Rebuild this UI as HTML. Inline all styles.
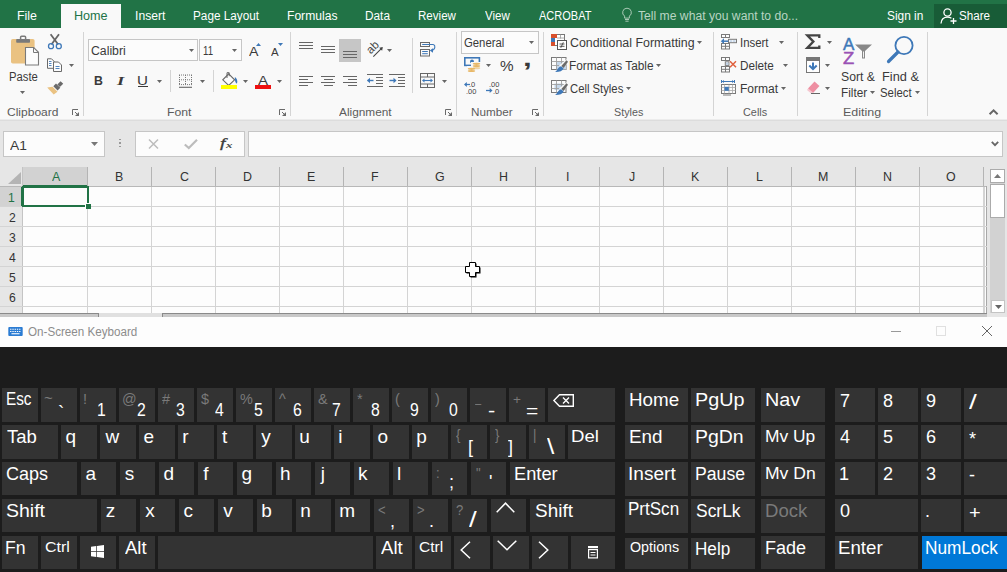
<!DOCTYPE html>
<html><head><meta charset="utf-8"><title>Excel - On-Screen Keyboard</title>
<style>
html,body{margin:0;padding:0;}
body{width:1007px;height:572px;overflow:hidden;position:relative;background:#e6e6e6;font-family:"Liberation Sans",sans-serif;}
#r{position:absolute;left:0;top:0;width:1007px;height:572px;overflow:hidden;}
#r>div,#r>span,#r>svg{position:absolute;}
#r>span{white-space:pre;line-height:1;transform-origin:0 0;}
#r>svg{overflow:visible;}
</style></head><body><div id="r">
<div style="left:0px;top:0px;width:1007px;height:28px;background:#217346;"></div>
<div style="left:0px;top:28px;width:1007px;height:92px;background:#f9f9f9;"></div>
<div style="left:0px;top:119px;width:1007px;height:1px;background:#ececec;"></div>
<div style="left:0px;top:120px;width:1007px;height:1px;background:#dcdcdc;"></div>
<div style="left:61px;top:4px;width:60px;height:26px;background:#f9f9f9;"></div>
<div style="left:934px;top:4px;width:73px;height:24px;background:#185c37;"></div>
<span style="left:17.18px;top:10.32px;font-size:12.5px;color:#fff;transform:scaleX(0.9913);">File</span>
<span style="left:73.97px;top:10.32px;font-size:12.5px;color:#217346;transform:scaleX(1.0075);">Home</span>
<span style="left:134.88px;top:10.32px;font-size:12.5px;color:#fff;transform:scaleX(0.9728);">Insert</span>
<span style="left:193.04px;top:10.32px;font-size:12.5px;color:#fff;transform:scaleX(0.9409);">Page Layout</span>
<span style="left:287.01px;top:10.32px;font-size:12.5px;color:#fff;transform:scaleX(0.9681);">Formulas</span>
<span style="left:365.03px;top:10.32px;font-size:12.5px;color:#fff;transform:scaleX(0.9457);">Data</span>
<span style="left:418.05px;top:10.32px;font-size:12.5px;color:#fff;transform:scaleX(0.9252);">Review</span>
<span style="left:484.95px;top:10.32px;font-size:12.5px;color:#fff;transform:scaleX(0.9236);">View</span>
<span style="left:538.98px;top:10.32px;font-size:12.5px;color:#fff;transform:scaleX(0.8817);">ACROBAT</span>
<span style="left:637.73px;top:10.32px;font-size:12.5px;color:#b9d5c3;transform:scaleX(0.9719);">Tell me what you want to do...</span>
<span style="left:887.46px;top:10.32px;font-size:12.5px;color:#fff;transform:scaleX(0.9500);">Sign in</span>
<span style="left:959.47px;top:10.32px;font-size:12.5px;color:#fff;transform:scaleX(0.9307);">Share</span>
<svg style="left:620.8px;top:7px;" width="12" height="16" viewBox="0 0 12 16"><path d="M6 1.2a4.3 4.3 0 0 0-2.4 7.9v2h4.8v-2A4.3 4.3 0 0 0 6 1.2z" fill="none" stroke="#a9c9b5" stroke-width="1"/><path d="M4 12.5h4M4.4 14.2h3.2" stroke="#a9c9b5" stroke-width="1"/></svg>
<svg style="left:940px;top:7px;" width="18" height="18" viewBox="0 0 18 18"><circle cx="7.5" cy="5.5" r="3.6" fill="none" stroke="#fff" stroke-width="1.3"/><path d="M1 16.5c.3-4 2.6-6.3 6.5-6.3 1.6 0 2.9.4 3.9 1.1" fill="none" stroke="#fff" stroke-width="1.3"/><path d="M13.5 11v6M10.5 14h6" stroke="#fff" stroke-width="1.3"/></svg>
<div style="left:83px;top:32px;width:1px;height:84px;background:#d4d4d4;"></div>
<div style="left:290px;top:32px;width:1px;height:84px;background:#d4d4d4;"></div>
<div style="left:456px;top:32px;width:1px;height:84px;background:#d4d4d4;"></div>
<div style="left:543px;top:32px;width:1px;height:84px;background:#d4d4d4;"></div>
<div style="left:713px;top:32px;width:1px;height:84px;background:#d4d4d4;"></div>
<div style="left:797px;top:32px;width:1px;height:84px;background:#d4d4d4;"></div>
<div style="left:927px;top:32px;width:1px;height:84px;background:#d4d4d4;"></div>
<span style="left:6.99px;top:107.09px;font-size:11px;color:#5c5c5c;transform:scaleX(1.0935);">Clipboard</span>
<span style="left:166.60px;top:107.09px;font-size:11px;color:#5c5c5c;transform:scaleX(1.1128);">Font</span>
<span style="left:339.28px;top:107.09px;font-size:11px;color:#5c5c5c;transform:scaleX(1.0755);">Alignment</span>
<span style="left:470.64px;top:107.09px;font-size:11px;color:#5c5c5c;transform:scaleX(1.0621);">Number</span>
<span style="left:613.71px;top:107.09px;font-size:11px;color:#5c5c5c;transform:scaleX(0.9774);">Styles</span>
<span style="left:742.85px;top:107.09px;font-size:11px;color:#5c5c5c;transform:scaleX(0.9875);">Cells</span>
<span style="left:843.38px;top:107.09px;font-size:11px;color:#5c5c5c;transform:scaleX(1.1336);">Editing</span>
<svg style="left:71.9px;top:109px;" width="8" height="8" viewBox="0 0 8 8"><path d="M0.500 6V0.500H6" fill="none" stroke="#6a6a6a" stroke-width="1"/><path d="M3 3l2.500 2.500" stroke="#6a6a6a" stroke-width="1"/><path d="M7 3v4H3z" fill="#6a6a6a"/></svg>
<svg style="left:278.9px;top:109px;" width="8" height="8" viewBox="0 0 8 8"><path d="M0.500 6V0.500H6" fill="none" stroke="#6a6a6a" stroke-width="1"/><path d="M3 3l2.500 2.500" stroke="#6a6a6a" stroke-width="1"/><path d="M7 3v4H3z" fill="#6a6a6a"/></svg>
<svg style="left:445.3px;top:109px;" width="8" height="8" viewBox="0 0 8 8"><path d="M0.500 6V0.500H6" fill="none" stroke="#6a6a6a" stroke-width="1"/><path d="M3 3l2.500 2.500" stroke="#6a6a6a" stroke-width="1"/><path d="M7 3v4H3z" fill="#6a6a6a"/></svg>
<svg style="left:532.2px;top:109px;" width="8" height="8" viewBox="0 0 8 8"><path d="M0.500 6V0.500H6" fill="none" stroke="#6a6a6a" stroke-width="1"/><path d="M3 3l2.500 2.500" stroke="#6a6a6a" stroke-width="1"/><path d="M7 3v4H3z" fill="#6a6a6a"/></svg>
<svg style="left:0px;top:0px;" width="100" height="100" viewBox="0 0 100 100">
<rect x="11" y="39" width="23.6" height="24.6" rx="1.8" fill="#eac282"/>
<rect x="16.2" y="39" width="13.8" height="3.8" rx="0.8" fill="#7a7a7a"/>
<rect x="20.6" y="36.300" width="5" height="4" rx="1" fill="none" stroke="#7a7a7a" stroke-width="1.500"/>
<path d="M25.500 47.500h8.200l4.800 4.800v12.700h-13z" fill="#fcfcfc" stroke="#7a7a7a" stroke-width="1.100"/>
<path d="M33.500 47.500v5h5" fill="none" stroke="#7a7a7a" stroke-width="1"/>
<path d="M50.600 34.300L58.200 44.500M59 34.300L51.400 44.500" stroke="#666" stroke-width="1.800" fill="none"/>
<circle cx="51" cy="46.200" r="2.500" fill="none" stroke="#3e78b8" stroke-width="1.300"/>
<circle cx="58.800" cy="46.200" r="2.500" fill="none" stroke="#3e78b8" stroke-width="1.300"/>
<path d="M47.500 58.800h4l2.500 2.500v7h-6.500z" fill="#fcfcfc" stroke="#6a6a6a" stroke-width="1"/>
<path d="M53.500 62h5l3 3v6.500h-8z" fill="#fcfcfc" stroke="#6a6a6a" stroke-width="1"/>
<path d="M49 61.500h2.500M49 63.500h2.500M49 65.500h2.500M55.500 66.500h4M55.500 68.500h4" stroke="#3e78b8" stroke-width="0.900"/>
<path d="M57.300 84.500l3.300-3.300 2.600 2.600-3.300 3.300z" fill="#6a6a6a"/>
<path d="M53.300 86.200l2.700-2.700 4.300 4.300-2.700 2.700z" fill="#6a6a6a"/>
<path d="M52.500 86.800l5 5-3.800 2.800-6.500-7z" fill="#eac282"/>
</svg>
<span style="left:8.68px;top:71.14px;font-size:12px;color:#3a3a3a;transform:scaleX(0.9394);">Paste</span>
<svg style="left:20px;top:91px;" width="5" height="3" viewBox="0 0 5 3"><path d="M0 0H5L2.5 3z" fill="#666"/></svg>
<svg style="left:69px;top:64px;" width="5" height="3" viewBox="0 0 5 3"><path d="M0 0H5L2.5 3z" fill="#666"/></svg>
<div style="left:88px;top:39px;width:110px;height:22px;background:#fcfcfc;border:1px solid #c6c6c6;box-sizing:border-box;"></div>
<div style="left:199px;top:39px;width:43px;height:22px;background:#fcfcfc;border:1px solid #c6c6c6;box-sizing:border-box;"></div>
<span style="left:91.08px;top:45.44px;font-size:12px;color:#3a3a3a;transform:scaleX(1.0218);">Calibri</span>
<span style="left:202.77px;top:45.44px;font-size:12px;color:#3a3a3a;transform:scaleX(0.8018);">11</span>
<svg style="left:189px;top:49px;" width="5" height="3" viewBox="0 0 5 3"><path d="M0 0H5L2.5 3z" fill="#666"/></svg>
<svg style="left:232px;top:49px;" width="5" height="3" viewBox="0 0 5 3"><path d="M0 0H5L2.5 3z" fill="#666"/></svg>
<span style="left:248.57px;top:44.67px;font-size:13.5px;color:#3a3a3a;transform:scaleX(1.0501);">A</span>
<svg style="left:256px;top:43px;" width="5" height="3" viewBox="0 0 5 3"><path d="M0 3H5L2.5 0z" fill="#3e78b8"/></svg>
<span style="left:271.38px;top:47.21px;font-size:10.5px;color:#3a3a3a;transform:scaleX(1.0916);">A</span>
<svg style="left:278px;top:43px;" width="5" height="3" viewBox="0 0 5 3"><path d="M0 0H5L2.5 3z" fill="#3e78b8"/></svg>
<span style="left:93.68px;top:74.94px;font-size:12px;color:#3a3a3a;font-weight:bold;transform:scaleX(1.0248);">B</span>
<span style="left:117.07px;top:74.52px;font-size:12.5px;color:#3a3a3a;font-family:'Liberation Serif',serif;font-style:italic;transform:scaleX(1.4895);font-weight:bold;">I</span>
<span style="left:137.23px;top:74.52px;font-size:12.5px;color:#3a3a3a;transform:scaleX(1.2115);">U</span>
<div style="left:138px;top:86px;width:9.5px;height:1px;background:#3a3a3a;"></div>
<svg style="left:157px;top:80px;" width="5" height="3" viewBox="0 0 5 3"><path d="M0 0H5L2.5 3z" fill="#666"/></svg>
<div style="left:170px;top:70px;width:1px;height:22px;background:#d4d4d4;"></div>
<div style="left:213px;top:70px;width:1px;height:22px;background:#d4d4d4;"></div>
<svg style="left:179px;top:73.5px;" width="14" height="14" viewBox="0 0 14 14"><path d="M0 1h13M0 5.800h13M0 10.600h13" fill="none" stroke="#777" stroke-width="1" stroke-dasharray="1 1"/><path d="M0.500 1v10M6.500 1v10M12.500 1v10" fill="none" stroke="#777" stroke-width="1" stroke-dasharray="1 1"/><path d="M0 13.300h13" stroke="#666" stroke-width="1.100"/></svg>
<svg style="left:200px;top:80px;" width="5" height="3" viewBox="0 0 5 3"><path d="M0 0H5L2.5 3z" fill="#666"/></svg>
<svg style="left:0px;top:0px;" width="300" height="100" viewBox="0 0 300 100"><path d="M228.700 73.900L234.600 79.800 228.700 85.500 222.800 79.800z" fill="#fcfcfc" stroke="#666" stroke-width="1.100"/>
<path d="M227 78v-5.300h2.200v3.500" fill="none" stroke="#666" stroke-width="1"/>
<path d="M234.900 77c2 1.300 3 3.800 2 6.800-1.700-1.200-2.300-3.300-2-6.800z" fill="#3e78b8"/><rect x="221" y="85" width="16" height="4" fill="#ffff00"/></svg>
<svg style="left:243px;top:80px;" width="5" height="3" viewBox="0 0 5 3"><path d="M0 0H5L2.5 3z" fill="#666"/></svg>
<span style="left:257.97px;top:73.67px;font-size:13.5px;color:#3a3a3a;transform:scaleX(1.1171);">A</span>
<div style="left:255px;top:85px;width:16px;height:4px;background:#ee1111;"></div>
<svg style="left:277px;top:80px;" width="5" height="3" viewBox="0 0 5 3"><path d="M0 0H5L2.5 3z" fill="#666"/></svg>
<div style="left:299px;top:42px;width:14px;height:1px;background:#666;"></div>
<div style="left:299px;top:45px;width:14px;height:1px;background:#666;"></div>
<div style="left:299px;top:48px;width:14px;height:1px;background:#666;"></div>
<div style="left:321px;top:46px;width:14px;height:1px;background:#666;"></div>
<div style="left:321px;top:49px;width:14px;height:1px;background:#666;"></div>
<div style="left:321px;top:52px;width:14px;height:1px;background:#666;"></div>
<div style="left:339px;top:39px;width:22px;height:23px;background:#c6c6c6;"></div>
<div style="left:343px;top:51px;width:14px;height:1px;background:#666;"></div>
<div style="left:343px;top:54px;width:14px;height:1px;background:#666;"></div>
<div style="left:343px;top:57px;width:14px;height:1px;background:#666;"></div>
<svg style="left:366px;top:41px;" width="18" height="17" viewBox="0 0 18 17"><text transform="translate(4.700,13.600) rotate(-45)" font-size="11.5" font-family="Liberation Sans,sans-serif" fill="#444">ab</text>
<path d="M7.300 15.600L15.800 7.100" stroke="#444" stroke-width="1.100"/><path d="M16.800 6.100l-3.600 .700 2.900 2.900z" fill="#444"/></svg>
<svg style="left:387px;top:49px;" width="5" height="3" viewBox="0 0 5 3"><path d="M0 0H5L2.5 3z" fill="#666"/></svg>
<div style="left:412px;top:38px;width:1px;height:55px;background:#d4d4d4;"></div>
<svg style="left:420px;top:42px;" width="17" height="16" viewBox="0 0 17 16"><rect x="0.500" y="0.500" width="9" height="4" fill="none" stroke="#6a6a6a"/><rect x="0.500" y="7.500" width="9" height="6.500" fill="none" stroke="#6a6a6a"/>
<path d="M2.200 2.500h11.500M2.200 9.500h5.600M2.200 11.700h5.600" stroke="#3e78b8" stroke-width="1"/><path d="M13.500 2.500c2 1 2.300 5.500-2.500 6" fill="none" stroke="#3e78b8" stroke-width="1.100"/><path d="M9.800 8.500l3.200-2.200v4.400z" fill="#3e78b8"/></svg>
<svg style="left:420px;top:73px;" width="15" height="15" viewBox="0 0 15 15"><rect x="0.5" y="0.5" width="14" height="14" fill="none" stroke="#666"/><path d="M0.5 4h14M0.5 11h14M7.5 0.5v3.5M7.5 11v3.5" stroke="#666"/>
<path d="M3 7.5h9" stroke="#3e78b8" stroke-width="1.1"/><path d="M2 7.5l2.5-2v4zM13 7.5l-2.5-2v4z" fill="#3e78b8"/></svg>
<svg style="left:442px;top:80px;" width="5" height="3" viewBox="0 0 5 3"><path d="M0 0H5L2.5 3z" fill="#666"/></svg>
<div style="left:299px;top:76px;width:14px;height:1px;background:#666;"></div>
<div style="left:299px;top:79px;width:9px;height:1px;background:#666;"></div>
<div style="left:299px;top:82px;width:14px;height:1px;background:#666;"></div>
<div style="left:299px;top:85px;width:9px;height:1px;background:#666;"></div>
<div style="left:321.0px;top:76px;width:14px;height:1px;background:#666;"></div>
<div style="left:323.5px;top:79px;width:9px;height:1px;background:#666;"></div>
<div style="left:321.0px;top:82px;width:14px;height:1px;background:#666;"></div>
<div style="left:323.5px;top:85px;width:9px;height:1px;background:#666;"></div>
<div style="left:343px;top:76px;width:14px;height:1px;background:#666;"></div>
<div style="left:348px;top:79px;width:9px;height:1px;background:#666;"></div>
<div style="left:343px;top:82px;width:14px;height:1px;background:#666;"></div>
<div style="left:348px;top:85px;width:9px;height:1px;background:#666;"></div>
<svg style="left:367px;top:74px;" width="16" height="13" viewBox="0 0 16 13"><path d="M0 0.5h16M9 3.5h7M9 6.5h7M9 9.5h7M0 12.5h16" stroke="#666" stroke-width="1"/><path d="M0.5 6.5h6" stroke="#3e78b8" stroke-width="1.4"/><path d="M0 6.5l3-2.8v5.6z" fill="#3e78b8"/></svg>
<svg style="left:389px;top:74px;" width="16" height="13" viewBox="0 0 16 13"><path d="M0 0.5h16M9 3.5h7M9 6.5h7M9 9.5h7M0 12.5h16" stroke="#666" stroke-width="1"/><path d="M0.5 6.5h6" stroke="#3e78b8" stroke-width="1.4"/><path d="M7.5 6.5l-3-2.8v5.6z" fill="#3e78b8"/></svg>
<div style="left:461px;top:31px;width:78px;height:23px;background:#fcfcfc;border:1px solid #c6c6c6;box-sizing:border-box;"></div>
<span style="left:464.13px;top:37.04px;font-size:12px;color:#3a3a3a;transform:scaleX(0.9446);">General</span>
<svg style="left:529px;top:41px;" width="5" height="3" viewBox="0 0 5 3"><path d="M0 0H5L2.5 3z" fill="#666"/></svg>
<svg style="left:464px;top:57px;" width="17" height="16" viewBox="0 0 17 16"><rect x="0.800" y="0.800" width="14.600" height="7.600" fill="none" stroke="#3e78b8" stroke-width="1.600"/><circle cx="8" cy="4.500" r="2" fill="#3e78b8"/>
<rect x="7" y="5" width="10" height="5" fill="#f9f9f9"/><rect x="3" y="9" width="10" height="6" fill="#f9f9f9"/>
<ellipse cx="12.500" cy="6.800" rx="3.700" ry="1.100" fill="#e8b868"/><ellipse cx="12.500" cy="9" rx="3.700" ry="1.100" fill="#e8b868"/><ellipse cx="12.500" cy="11.200" rx="3.700" ry="1.100" fill="#f0d4a4"/>
<ellipse cx="7.500" cy="11.800" rx="3.700" ry="1.100" fill="#e8b868"/><ellipse cx="7.500" cy="14" rx="3.700" ry="1.100" fill="#e8b868"/></svg>
<svg style="left:486px;top:64px;" width="5" height="3" viewBox="0 0 5 3"><path d="M0 0H5L2.5 3z" fill="#666"/></svg>
<span style="left:499.76px;top:59.05px;font-size:14px;color:#3a3a3a;transform:scaleX(1.0917);">%</span>
<span style="left:522.67px;top:48.47px;font-size:22px;color:#3a3a3a;font-weight:bold;transform:scaleX(1.4297);">,</span>
<svg style="left:464px;top:81px;" width="15" height="13" viewBox="0 0 15 13"><text x="5" y="6" font-size="7.5" font-family="Liberation Sans,sans-serif" fill="#444">.0</text><text x="2" y="13" font-size="7.5" font-family="Liberation Sans,sans-serif" fill="#444">.00</text>
<path d="M1 3.5h5" stroke="#3e78b8" stroke-width="1.3"/><path d="M0 3.5l2.8-2.5v5z" fill="#3e78b8"/></svg>
<svg style="left:486px;top:81px;" width="15" height="13" viewBox="0 0 15 13"><text x="3" y="6" font-size="7.5" font-family="Liberation Sans,sans-serif" fill="#444">.00</text><text x="7" y="13" font-size="7.5" font-family="Liberation Sans,sans-serif" fill="#444">.0</text>
<path d="M0 9.5h5" stroke="#3e78b8" stroke-width="1.3"/><path d="M6.5 9.5l-2.8-2.5v5z" fill="#3e78b8"/></svg>
<svg style="left:551px;top:34px;" width="16" height="16" viewBox="0 0 16 16"><rect x="0.5" y="0.5" width="13" height="11" fill="#fff" stroke="#777"/><rect x="0" y="0" width="6" height="4" fill="#d8502d"/><rect x="0" y="4" width="4" height="4" fill="#3e78b8"/><rect x="0" y="8" width="4" height="4" fill="#d8502d"/>
<path d="M6 4h7.5M9.5 0.5v4" stroke="#999" stroke-width="0.8"/><rect x="6.5" y="6.5" width="9" height="9" fill="#fff" stroke="#555"/><path d="M8.5 10h5M8.5 12.3h5M12.3 8.3l-2.5 5.5" stroke="#444" stroke-width="0.9"/></svg>
<svg style="left:551px;top:57px;" width="18" height="17" viewBox="0 0 18 17"><rect x="0.500" y="0.500" width="14.500" height="12" fill="#fcfcfc" stroke="#7a7a7a"/><rect x="5.500" y="4.500" width="9.500" height="8" fill="#c5d7ea"/><path d="M0.500 4.500h14.500M0.500 8.500h14.500M5.500 0.500v12M10.500 0.500v12" stroke="#a0a0a0" stroke-width="0.900"/>
<path d="M8 8.500l8-6.500 2 2.500-6.500 7.500z" fill="#f9f9f9"/>
<path d="M15.500 3.200l1.500 1.500-4.300 6.200-2.400-1.900z" fill="#6a6a6a"/><path d="M10 9.200l2.600 2c-1.100 3-4.600 4-8.600 3.800 2.500-1.300 2.500-4.800 6-5.800z" fill="#3e78b8"/></svg>
<svg style="left:551px;top:80px;" width="18" height="17" viewBox="0 0 18 17"><rect x="0.500" y="0.500" width="14.500" height="12" fill="#fcfcfc" stroke="#7a7a7a"/><rect x="3.500" y="3.500" width="8.500" height="6.500" fill="#c5d7ea"/><path d="M0.500 4.500h14.500M0.500 8.500h14.500M5.500 0.500v12M10.500 0.500v12" stroke="#a0a0a0" stroke-width="0.900"/>
<path d="M8 8.500l8-6.500 2 2.500-6.500 7.500z" fill="#f9f9f9"/>
<path d="M15.500 3.200l1.500 1.500-4.300 6.200-2.400-1.900z" fill="#6a6a6a"/><path d="M10 9.200l2.600 2c-1.100 3-4.600 4-8.600 3.800 2.500-1.300 2.500-4.800 6-5.800z" fill="#3e78b8"/></svg>
<span style="left:569.77px;top:36.64px;font-size:12px;color:#3a3a3a;transform:scaleX(1.0323);">Conditional Formatting</span>
<span style="left:569.43px;top:59.84px;font-size:12px;color:#3a3a3a;transform:scaleX(0.9855);">Format as Table</span>
<span style="left:569.83px;top:82.94px;font-size:12px;color:#3a3a3a;transform:scaleX(0.9400);">Cell Styles</span>
<svg style="left:697.3px;top:41px;" width="5" height="3" viewBox="0 0 5 3"><path d="M0 0H5L2.5 3z" fill="#666"/></svg>
<svg style="left:656px;top:64px;" width="5" height="3" viewBox="0 0 5 3"><path d="M0 0H5L2.5 3z" fill="#666"/></svg>
<svg style="left:625.7px;top:87px;" width="5" height="3" viewBox="0 0 5 3"><path d="M0 0H5L2.5 3z" fill="#666"/></svg>
<svg style="left:0px;top:0px;" width="800" height="100" viewBox="0 0 800 100">
<g fill="#fcfcfc" stroke="#7a7a7a" stroke-width="1">
<rect x="721.500" y="34.500" width="8" height="3"/><path d="M725.500 34.500v3"/>
<rect x="721.500" y="43.500" width="8" height="5.500"/><path d="M725.500 43.500v5.500M721.500 46.300h8"/>
<rect x="728.500" y="39.300" width="8" height="3.400"/>
<rect x="721.500" y="57.500" width="8" height="3"/><path d="M725.500 57.500v3"/>
<rect x="721.500" y="66.500" width="8" height="5.500"/><path d="M725.500 66.500v5.500M721.500 69.300h8"/>
<rect x="725.300" y="61.800" width="3.600" height="3.600"/>
<rect x="721.500" y="84.500" width="14" height="9"/><path d="M723 95h8"/>
</g>
<rect x="729.800" y="40.300" width="2.500" height="1.500" fill="#bdd0e6"/><rect x="733" y="40.300" width="2.500" height="1.500" fill="#bdd0e6"/>
<rect x="726" y="62.500" width="2.300" height="2.300" fill="#bdd0e6"/>
<path d="M720.800 41.200l3.200-2.900v5.800z" fill="#3e78b8"/><path d="M722.500 41.200h5.700" stroke="#3e78b8" stroke-width="1.500"/>
<path d="M730 61.300l6 6M736 61.300l-6 6" stroke="#e0603d" stroke-width="1.500"/>
<path d="M721.500 80v3M734.500 80v3M722 81.500h12" stroke="#3e78b8" stroke-width="1"/><path d="M722 81.500l2-1.500v3zM734 81.500l-2-1.500v3z" fill="#3e78b8"/>
<path d="M721.500 87.500h14M721.500 90.500h14M724.500 84.500v9M729 84.500v9M732.500 84.500v9" stroke="#a8a8a8" stroke-width="0.800"/>
<rect x="724.500" y="86.800" width="4.300" height="4" fill="#3e78b8"/>
</svg>
<span style="left:740.25px;top:36.64px;font-size:12px;color:#3a3a3a;transform:scaleX(0.9508);">Insert</span>
<span style="left:739.54px;top:59.84px;font-size:12px;color:#3a3a3a;transform:scaleX(0.9768);">Delete</span>
<span style="left:739.51px;top:82.94px;font-size:12px;color:#3a3a3a;transform:scaleX(1.0046);">Format</span>
<svg style="left:779px;top:41px;" width="5" height="3" viewBox="0 0 5 3"><path d="M0 0H5L2.5 3z" fill="#666"/></svg>
<svg style="left:783px;top:64px;" width="5" height="3" viewBox="0 0 5 3"><path d="M0 0H5L2.5 3z" fill="#666"/></svg>
<svg style="left:781px;top:87px;" width="5" height="3" viewBox="0 0 5 3"><path d="M0 0H5L2.5 3z" fill="#666"/></svg>
<svg style="left:804.5px;top:34px;" width="16" height="15.5" viewBox="0 0 16 15.5"><path d="M14.300 4V1.300H2.300L8.400 7.600 2.300 13.900H14.300V11.500" fill="none" stroke="#444" stroke-width="2.300"/></svg>
<svg style="left:827px;top:41px;" width="5" height="3" viewBox="0 0 5 3"><path d="M0 0H5L2.5 3z" fill="#666"/></svg>
<svg style="left:806px;top:57px;" width="14" height="16" viewBox="0 0 14 16"><rect x="0.500" y="0.500" width="13" height="15" fill="#fff" stroke="#777"/><rect x="0" y="0" width="14" height="4" fill="#777"/><path d="M7 5.500v6.500" stroke="#3e78b8" stroke-width="2"/><path d="M3.300 8.500l3.700 3.700L10.700 8.500" fill="none" stroke="#3e78b8" stroke-width="2"/></svg>
<svg style="left:825px;top:64px;" width="5" height="3" viewBox="0 0 5 3"><path d="M0 0H5L2.5 3z" fill="#666"/></svg>
<svg style="left:806px;top:81px;" width="15" height="13" viewBox="0 0 15 13"><path d="M8.500 0.500l5 4.500-6.500 7-5-4.500z" fill="#ee8fa2"/><path d="M2 7.500l5 4.500-1.300 1-4.700-4z" fill="#f6c6cf"/><path d="M5 12.500h9" stroke="#666" stroke-width="1"/></svg>
<svg style="left:825px;top:87px;" width="5" height="3" viewBox="0 0 5 3"><path d="M0 0H5L2.5 3z" fill="#666"/></svg>
<span style="left:842.67px;top:36.13px;font-size:16.5px;color:#3e78b8;transform:scaleX(1.0328);-webkit-text-stroke:0.45px #3e78b8;">A</span>
<span style="left:843.01px;top:49.63px;font-size:16.5px;color:#9a52b5;transform:scaleX(1.1173);-webkit-text-stroke:0.45px #9a52b5;">Z</span>
<svg style="left:855px;top:44px;" width="17" height="15" viewBox="0 0 17 15"><path d="M0 0.500h17l-6.500 6v8h-4v-8z" fill="#fff"/><path d="M0 0.500h17l-7 6.500v7.500h-3v-7.500z" fill="#888"/><path d="M8 7.500v6h1v-6z" fill="#f3f3f3"/></svg>
<span style="left:841.05px;top:71.14px;font-size:12px;color:#3a3a3a;transform:scaleX(1.0180);">Sort &amp;</span>
<span style="left:841.03px;top:87.34px;font-size:12px;color:#3a3a3a;transform:scaleX(0.9811);">Filter</span>
<svg style="left:869.7px;top:91px;" width="5" height="3" viewBox="0 0 5 3"><path d="M0 0H5L2.5 3z" fill="#666"/></svg>
<svg style="left:886px;top:34px;" width="30" height="30" viewBox="0 0 30 30"><circle cx="18" cy="11.500" r="8.600" fill="none" stroke="#3e78b8" stroke-width="1.800"/><path d="M2.500 27.500l9.500-9.500" stroke="#3e78b8" stroke-width="3.200" stroke-linecap="round"/></svg>
<span style="left:881.95px;top:71.14px;font-size:12px;color:#3a3a3a;transform:scaleX(1.0654);">Find &amp;</span>
<span style="left:880.48px;top:87.34px;font-size:12px;color:#3a3a3a;transform:scaleX(0.9475);">Select</span>
<svg style="left:915px;top:91px;" width="5" height="3" viewBox="0 0 5 3"><path d="M0 0H5L2.5 3z" fill="#666"/></svg>
<svg style="left:988px;top:108px;" width="12" height="8" viewBox="0 0 12 8"><path d="M1.600 6.300L5.600 2.300 9.600 6.300" fill="none" stroke="#666" stroke-width="2"/></svg>
<div style="left:0px;top:121px;width:1007px;height:46px;background:#e6e6e6;"></div>
<div style="left:3px;top:131px;width:102px;height:26px;background:#fcfcfc;border:1px solid #c6c6c6;box-sizing:border-box;"></div>
<span style="left:9.77px;top:138.59px;font-size:13px;color:#3a3a3a;transform:scaleX(1.0629);">A1</span>
<svg style="left:91px;top:142px;" width="7" height="4" viewBox="0 0 7 4"><path d="M0 0H7L3.5 4z" fill="#777"/></svg>
<div style="left:119.3px;top:138.5px;width:1.8px;height:1.8px;background:#999;"></div>
<div style="left:119.3px;top:142px;width:1.8px;height:1.8px;background:#999;"></div>
<div style="left:119.3px;top:145.5px;width:1.8px;height:1.8px;background:#999;"></div>
<div style="left:135px;top:131px;width:110px;height:26px;background:#fcfcfc;border:1px solid #c6c6c6;box-sizing:border-box;"></div>
<svg style="left:148px;top:139px;" width="11" height="10" viewBox="0 0 11 10"><path d="M1 0.500l9 9M10 0.500l-9 9" stroke="#bcbcbc" stroke-width="1.500"/></svg>
<svg style="left:183.5px;top:139px;" width="14" height="10" viewBox="0 0 14 10"><path d="M0.800 5.500l4 3.500L13 0.800" fill="none" stroke="#bcbcbc" stroke-width="2.200"/></svg>
<span style="left:220.28px;top:136.17px;font-size:13.5px;color:#3a3a3a;font-family:'Liberation Serif',serif;font-style:italic;transform:scaleX(1.4550);-webkit-text-stroke:0.3px #3a3a3a;">f</span>
<span style="left:226.36px;top:140.58px;font-size:9px;color:#4a4a4a;font-family:'Liberation Serif',serif;font-style:italic;transform:scaleX(1.4362);font-weight:bold;">x</span>
<div style="left:248px;top:131px;width:755px;height:26px;background:#fcfcfc;border:1px solid #c6c6c6;box-sizing:border-box;"></div>
<svg style="left:991px;top:140.5px;" width="8" height="6" viewBox="0 0 8 6"><path d="M0.800 0.800l3.200 3.400 3.200-3.400" fill="none" stroke="#666" stroke-width="1.800"/></svg>
<div style="left:0px;top:167px;width:988px;height:146px;background:#fdfdfd;"></div>
<div style="left:0px;top:167px;width:987px;height:19px;background:#e6e6e6;"></div>
<div style="left:0px;top:186px;width:987px;height:1px;background:#b8b8b8;"></div>
<div style="left:0px;top:187px;width:22px;height:126px;background:#e6e6e6;"></div>
<div style="left:22px;top:167px;width:1px;height:146px;background:#c4c4c4;"></div>
<svg style="left:8px;top:172px;" width="14" height="12" viewBox="0 0 14 12"><path d="M13 0v12H0z" fill="#b4b4b4"/></svg>
<div style="left:23px;top:167px;width:64px;height:19px;background:#d2d2d2;"></div>
<div style="left:23px;top:185px;width:65px;height:2px;background:#217346;"></div>
<div style="left:0px;top:187px;width:22px;height:19px;background:#d2d2d2;"></div>
<div style="left:21px;top:187px;width:2px;height:20px;background:#217346;"></div>
<div style="left:87px;top:167px;width:1px;height:19px;background:#b4b4b4;"></div>
<div style="left:87px;top:187px;width:1px;height:126px;background:#d4d4d4;"></div>
<span style="left:51.56px;top:170.37px;font-size:13.5px;color:#217346;transform:scaleX(0.9200);">A</span>
<div style="left:151px;top:167px;width:1px;height:19px;background:#b4b4b4;"></div>
<div style="left:151px;top:187px;width:1px;height:126px;background:#d4d4d4;"></div>
<span style="left:114.98px;top:170.37px;font-size:13.5px;color:#333;transform:scaleX(0.9200);">B</span>
<div style="left:215px;top:167px;width:1px;height:19px;background:#b4b4b4;"></div>
<div style="left:215px;top:187px;width:1px;height:126px;background:#d4d4d4;"></div>
<span style="left:179.74px;top:170.37px;font-size:13.5px;color:#333;transform:scaleX(0.9200);">C</span>
<div style="left:279px;top:167px;width:1px;height:19px;background:#b4b4b4;"></div>
<div style="left:279px;top:187px;width:1px;height:126px;background:#d4d4d4;"></div>
<span style="left:242.60px;top:170.37px;font-size:13.5px;color:#333;transform:scaleX(0.9200);">D</span>
<div style="left:343px;top:167px;width:1px;height:19px;background:#b4b4b4;"></div>
<div style="left:343px;top:187px;width:1px;height:126px;background:#d4d4d4;"></div>
<span style="left:306.92px;top:170.37px;font-size:13.5px;color:#333;transform:scaleX(0.9200);">E</span>
<div style="left:407px;top:167px;width:1px;height:19px;background:#b4b4b4;"></div>
<div style="left:407px;top:187px;width:1px;height:126px;background:#d4d4d4;"></div>
<span style="left:371.25px;top:170.37px;font-size:13.5px;color:#333;transform:scaleX(0.9200);">F</span>
<div style="left:471px;top:167px;width:1px;height:19px;background:#b4b4b4;"></div>
<div style="left:471px;top:187px;width:1px;height:126px;background:#d4d4d4;"></div>
<span style="left:434.82px;top:170.37px;font-size:13.5px;color:#333;transform:scaleX(0.9200);">G</span>
<div style="left:535px;top:167px;width:1px;height:19px;background:#b4b4b4;"></div>
<div style="left:535px;top:187px;width:1px;height:126px;background:#d4d4d4;"></div>
<span style="left:498.81px;top:170.37px;font-size:13.5px;color:#333;transform:scaleX(0.9200);">H</span>
<div style="left:599px;top:167px;width:1px;height:19px;background:#b4b4b4;"></div>
<div style="left:599px;top:187px;width:1px;height:126px;background:#d4d4d4;"></div>
<span style="left:565.57px;top:170.37px;font-size:13.5px;color:#333;transform:scaleX(0.9200);">I</span>
<div style="left:663px;top:167px;width:1px;height:19px;background:#b4b4b4;"></div>
<div style="left:663px;top:187px;width:1px;height:126px;background:#d4d4d4;"></div>
<span style="left:628.56px;top:170.37px;font-size:13.5px;color:#333;transform:scaleX(0.9200);">J</span>
<div style="left:727px;top:167px;width:1px;height:19px;background:#b4b4b4;"></div>
<div style="left:727px;top:187px;width:1px;height:126px;background:#d4d4d4;"></div>
<span style="left:690.72px;top:170.37px;font-size:13.5px;color:#333;transform:scaleX(0.9200);">K</span>
<div style="left:791px;top:167px;width:1px;height:19px;background:#b4b4b4;"></div>
<div style="left:791px;top:187px;width:1px;height:126px;background:#d4d4d4;"></div>
<span style="left:755.54px;top:170.37px;font-size:13.5px;color:#333;transform:scaleX(0.9200);">L</span>
<div style="left:855px;top:167px;width:1px;height:19px;background:#b4b4b4;"></div>
<div style="left:855px;top:187px;width:1px;height:126px;background:#d4d4d4;"></div>
<span style="left:818.13px;top:170.37px;font-size:13.5px;color:#333;transform:scaleX(0.9200);">M</span>
<div style="left:919px;top:167px;width:1px;height:19px;background:#b4b4b4;"></div>
<div style="left:919px;top:187px;width:1px;height:126px;background:#d4d4d4;"></div>
<span style="left:882.81px;top:170.37px;font-size:13.5px;color:#333;transform:scaleX(0.9200);">N</span>
<div style="left:983px;top:167px;width:1px;height:19px;background:#b4b4b4;"></div>
<div style="left:983px;top:187px;width:1px;height:126px;background:#d4d4d4;"></div>
<span style="left:946.47px;top:170.37px;font-size:13.5px;color:#333;transform:scaleX(0.9200);">O</span>
<div style="left:984px;top:187px;width:1px;height:126px;background:#d4d4d4;"></div>
<div style="left:986px;top:186px;width:1px;height:127px;background:#a8a8a8;"></div>
<div style="left:0px;top:206px;width:987px;height:1px;background:#d4d4d4;"></div>
<span style="left:8.46px;top:191.17px;font-size:13.5px;color:#217346;transform:scaleX(0.9000);">1</span>
<div style="left:0px;top:226px;width:987px;height:1px;background:#d4d4d4;"></div>
<span style="left:8.62px;top:211.17px;font-size:13.5px;color:#333;transform:scaleX(0.9000);">2</span>
<div style="left:0px;top:246px;width:987px;height:1px;background:#d4d4d4;"></div>
<span style="left:8.66px;top:231.17px;font-size:13.5px;color:#333;transform:scaleX(0.9000);">3</span>
<div style="left:0px;top:266px;width:987px;height:1px;background:#d4d4d4;"></div>
<span style="left:8.66px;top:251.17px;font-size:13.5px;color:#333;transform:scaleX(0.9000);">4</span>
<div style="left:0px;top:286px;width:987px;height:1px;background:#d4d4d4;"></div>
<span style="left:8.63px;top:271.17px;font-size:13.5px;color:#333;transform:scaleX(0.9000);">5</span>
<div style="left:0px;top:306px;width:987px;height:1px;background:#d4d4d4;"></div>
<span style="left:8.58px;top:291.17px;font-size:13.5px;color:#333;transform:scaleX(0.9000);">6</span>
<div style="left:22px;top:186px;width:67px;height:21px;background:transparent;border:2px solid #217346;box-sizing:border-box;"></div>
<div style="left:85px;top:203px;width:6px;height:6px;background:#fff;"></div>
<div style="left:86px;top:204px;width:5px;height:5px;background:#217346;"></div>
<div style="left:0px;top:313px;width:1007px;height:3.5px;background:#e0e0e0;"></div>
<div style="left:0px;top:313px;width:98px;height:3.5px;background:#c8c8c8;"></div>
<div style="left:0px;top:313px;width:98px;height:1px;background:#8a8a8a;"></div>
<div style="left:98px;top:313px;width:1px;height:3.5px;background:#8a8a8a;"></div>
<div style="left:162px;top:313px;width:825px;height:3.5px;background:#c8c8c8;"></div>
<div style="left:162px;top:313px;width:825px;height:1px;background:#8a8a8a;"></div>
<div style="left:162px;top:313px;width:1px;height:3.5px;background:#8a8a8a;"></div>
<div style="left:987px;top:167px;width:20px;height:149.5px;background:#e6e6e6;"></div>
<div style="left:990px;top:169px;width:15px;height:144px;background:#d2d2d2;"></div>
<div style="left:990px;top:169px;width:15px;height:14px;background:#fff;border:1px solid #ababab;box-sizing:border-box;"></div>
<svg style="left:994px;top:173.5px;" width="7" height="4" viewBox="0 0 7 4"><path d="M0 4h7l-3.500-4z" fill="#777"/></svg>
<div style="left:990px;top:184px;width:15px;height:34px;background:#fff;border:1px solid #ababab;box-sizing:border-box;"></div>
<div style="left:991px;top:300px;width:14px;height:13px;background:#fff;border:1px solid #c4c4c4;box-sizing:border-box;"></div>
<svg style="left:994.5px;top:304.5px;" width="7" height="4" viewBox="0 0 7 4"><path d="M0 0h7l-3.500 4z" fill="#666"/></svg>
<svg style="left:465px;top:262px;" width="16" height="16" viewBox="0 0 16 16"><path d="M5.500 1.500h6v4h4v6h-4v4h-6v-4h-4v-6h4z" fill="#000"/><path d="M4.500 0.500h6v4h4v6h-4v4h-6v-4h-4v-6h4z" fill="#fff" stroke="#000" stroke-width="1"/></svg>
<div style="left:0px;top:316.5px;width:1007px;height:30.5px;background:#fdfdfd;"></div>
<div style="left:0px;top:347px;width:1007px;height:225px;background:#1c1c1c;"></div>
<svg style="left:7.5px;top:327px;" width="15" height="9" viewBox="0 0 16 10"><rect x="0" y="0" width="16" height="10" rx="1" fill="#2b7cd3"/><path d="M2 2.500h12M2 5h12" stroke="#fff" stroke-width="1.200" stroke-dasharray="1.500 1"/><path d="M3.500 7.500h9" stroke="#fff" stroke-width="1.200"/></svg>
<span style="left:28.45px;top:326.44px;font-size:12px;color:#8c8c8c;transform:scaleX(0.9696);">On-Screen Keyboard</span>
<div style="left:891px;top:331px;width:10px;height:1px;background:#999;"></div>
<div style="left:936px;top:326px;width:10px;height:10px;background:transparent;border:1px solid #e0e0e0;box-sizing:border-box;"></div>
<svg style="left:982px;top:326px;" width="10" height="10" viewBox="0 0 10 10"><path d="M0 0l10 10M10 0l-10 10" stroke="#666" stroke-width="1"/></svg>
<div style="left:2px;top:388px;width:36px;height:34px;background:#333333;"></div>
<span style="left:5.95px;top:390.78px;font-size:17.5px;color:#ffffff;transform:scaleX(0.8726);">Esc</span>
<div style="left:41px;top:388px;width:36px;height:34px;background:#333333;"></div>
<div style="left:80px;top:388px;width:36px;height:34px;background:#333333;"></div>
<div style="left:119px;top:388px;width:36px;height:34px;background:#333333;"></div>
<div style="left:158px;top:388px;width:36px;height:34px;background:#333333;"></div>
<div style="left:197px;top:388px;width:36px;height:34px;background:#333333;"></div>
<div style="left:236px;top:388px;width:36px;height:34px;background:#333333;"></div>
<div style="left:275px;top:388px;width:36px;height:34px;background:#333333;"></div>
<div style="left:314px;top:388px;width:36px;height:34px;background:#333333;"></div>
<div style="left:353px;top:388px;width:36px;height:34px;background:#333333;"></div>
<div style="left:392px;top:388px;width:36px;height:34px;background:#333333;"></div>
<div style="left:431px;top:388px;width:36px;height:34px;background:#333333;"></div>
<div style="left:470px;top:388px;width:36px;height:34px;background:#333333;"></div>
<div style="left:509px;top:388px;width:36px;height:34px;background:#333333;"></div>
<span style="left:83.00px;top:391.28px;font-size:15.5px;color:#7a7a7a;transform:scaleX(0.9300);">!</span>
<span style="left:97.30px;top:401.78px;font-size:17.5px;color:#ffffff;transform:scaleX(0.9000);">1</span>
<span style="left:122.17px;top:391.28px;font-size:15.5px;color:#7a7a7a;transform:scaleX(0.9300);">@</span>
<span style="left:136.71px;top:401.78px;font-size:17.5px;color:#ffffff;transform:scaleX(0.9000);">2</span>
<span style="left:162.24px;top:391.28px;font-size:15.5px;color:#7a7a7a;transform:scaleX(0.9300);">#</span>
<span style="left:175.90px;top:401.78px;font-size:17.5px;color:#ffffff;transform:scaleX(0.9000);">3</span>
<span style="left:201.15px;top:391.28px;font-size:15.5px;color:#7a7a7a;transform:scaleX(0.9300);">$</span>
<span style="left:215.14px;top:401.78px;font-size:17.5px;color:#ffffff;transform:scaleX(0.9000);">4</span>
<span style="left:239.79px;top:391.28px;font-size:15.5px;color:#7a7a7a;transform:scaleX(0.9300);">%</span>
<span style="left:253.87px;top:401.78px;font-size:17.5px;color:#ffffff;transform:scaleX(0.9000);">5</span>
<span style="left:279.23px;top:391.28px;font-size:15.5px;color:#7a7a7a;transform:scaleX(0.9300);">^</span>
<span style="left:292.70px;top:401.78px;font-size:17.5px;color:#ffffff;transform:scaleX(0.9000);">6</span>
<span style="left:317.79px;top:391.28px;font-size:15.5px;color:#7a7a7a;transform:scaleX(0.9300);">&amp;</span>
<span style="left:331.69px;top:401.78px;font-size:17.5px;color:#ffffff;transform:scaleX(0.9000);">7</span>
<span style="left:357.07px;top:391.28px;font-size:15.5px;color:#7a7a7a;transform:scaleX(0.9300);">*</span>
<span style="left:370.82px;top:401.78px;font-size:17.5px;color:#ffffff;transform:scaleX(0.9000);">8</span>
<span style="left:395.41px;top:391.28px;font-size:15.5px;color:#7a7a7a;transform:scaleX(0.9300);">(</span>
<span style="left:409.76px;top:401.78px;font-size:17.5px;color:#ffffff;transform:scaleX(0.9000);">9</span>
<span style="left:435.22px;top:391.28px;font-size:15.5px;color:#7a7a7a;transform:scaleX(0.9300);">)</span>
<span style="left:448.88px;top:401.78px;font-size:17.5px;color:#ffffff;transform:scaleX(0.9000);">0</span>
<span style="left:44.33px;top:391.32px;font-size:14.5px;color:#7a7a7a;transform:scaleX(1.0328);">~</span>
<span style="left:58.42px;top:402.51px;font-size:19px;color:#ffffff;transform:scaleX(0.9915);">`</span>
<span style="left:474.80px;top:397.94px;font-size:12px;color:#7a7a7a;transform:scaleX(0.9298);">–</span>
<span style="left:488.04px;top:401.01px;font-size:19px;color:#ffffff;transform:scaleX(1.1426);">-</span>
<span style="left:512.74px;top:393.52px;font-size:12.5px;color:#7a7a7a;transform:scaleX(1.0868);">+</span>
<span style="left:525.77px;top:400.51px;font-size:19px;color:#ffffff;transform:scaleX(1.1050);">=</span>
<div style="left:548px;top:388px;width:67px;height:34px;background:#333333;"></div>
<svg style="left:553px;top:393.5px;" width="21" height="13" viewBox="0 0 21 13"><path d="M6.500 0.700H20.300V12.300H6.500L0.900 6.500z" fill="none" stroke="#fff" stroke-width="1.400"/><path d="M10 3.500l6 6M16 3.500l-6 6" stroke="#fff" stroke-width="1.400"/></svg>
<div style="left:2px;top:425px;width:56px;height:34px;background:#333333;"></div>
<span style="left:6.88px;top:427.31px;font-size:19px;color:#ffffff;transform:scaleX(0.9741);">Tab</span>
<div style="left:61px;top:425px;width:36px;height:34px;background:#333333;"></div>
<span style="left:65.60px;top:427.31px;font-size:19px;color:#ffffff;">q</span>
<div style="left:100px;top:425px;width:36px;height:34px;background:#333333;"></div>
<span style="left:105.43px;top:427.31px;font-size:19px;color:#ffffff;">w</span>
<div style="left:139px;top:425px;width:36px;height:34px;background:#333333;"></div>
<span style="left:143.59px;top:427.31px;font-size:19px;color:#ffffff;">e</span>
<div style="left:178px;top:425px;width:36px;height:34px;background:#333333;"></div>
<span style="left:182.14px;top:427.31px;font-size:19px;color:#ffffff;">r</span>
<div style="left:217px;top:425px;width:36px;height:34px;background:#333333;"></div>
<span style="left:222.11px;top:427.31px;font-size:19px;color:#ffffff;">t</span>
<div style="left:256px;top:425px;width:36px;height:34px;background:#333333;"></div>
<span style="left:261.35px;top:427.31px;font-size:19px;color:#ffffff;">y</span>
<div style="left:295px;top:425px;width:36px;height:34px;background:#333333;"></div>
<span style="left:299.17px;top:427.31px;font-size:19px;color:#ffffff;">u</span>
<div style="left:334px;top:425px;width:36px;height:34px;background:#333333;"></div>
<span style="left:338.13px;top:427.31px;font-size:19px;color:#ffffff;">i</span>
<div style="left:373px;top:425px;width:36px;height:34px;background:#333333;"></div>
<span style="left:377.60px;top:427.31px;font-size:19px;color:#ffffff;">o</span>
<div style="left:412px;top:425px;width:36px;height:34px;background:#333333;"></div>
<span style="left:416.18px;top:427.31px;font-size:19px;color:#ffffff;">p</span>
<div style="left:451px;top:425px;width:36px;height:34px;background:#333333;"></div>
<span style="left:455.58px;top:428.32px;font-size:14.5px;color:#7a7a7a;transform:scaleX(0.9000);">{</span>
<span style="left:467.71px;top:436.51px;font-size:19px;color:#ffffff;transform:scaleX(0.9500);">[</span>
<div style="left:490px;top:425px;width:36px;height:34px;background:#333333;"></div>
<span style="left:494.58px;top:428.32px;font-size:14.5px;color:#7a7a7a;transform:scaleX(0.9000);">}</span>
<span style="left:507.86px;top:436.51px;font-size:19px;color:#ffffff;transform:scaleX(0.9500);">]</span>
<div style="left:529px;top:425px;width:36px;height:34px;background:#333333;"></div>
<span style="left:532.63px;top:428.32px;font-size:14.5px;color:#7a7a7a;transform:scaleX(0.9000);">|</span>
<span style="left:546.70px;top:436.35px;font-size:22.5px;color:#ffffff;transform:scaleX(1.1678);">\</span>
<div style="left:568px;top:425px;width:47px;height:34px;background:#333333;"></div>
<span style="left:571.08px;top:427.61px;font-size:17px;color:#ffffff;transform:scaleX(1.0924);">Del</span>
<div style="left:2px;top:462px;width:75px;height:33px;background:#333333;"></div>
<span style="left:6.08px;top:464.31px;font-size:19px;color:#ffffff;transform:scaleX(0.9484);">Caps</span>
<div style="left:81px;top:462px;width:35px;height:33px;background:#333333;"></div>
<span style="left:85.59px;top:464.31px;font-size:19px;color:#ffffff;">a</span>
<div style="left:120px;top:462px;width:35px;height:33px;background:#333333;"></div>
<span style="left:124.87px;top:464.31px;font-size:19px;color:#ffffff;">s</span>
<div style="left:159px;top:462px;width:35px;height:33px;background:#333333;"></div>
<span style="left:163.60px;top:464.31px;font-size:19px;color:#ffffff;">d</span>
<div style="left:198px;top:462px;width:35px;height:33px;background:#333333;"></div>
<span style="left:203.13px;top:464.31px;font-size:19px;color:#ffffff;">f</span>
<div style="left:237px;top:462px;width:35px;height:33px;background:#333333;"></div>
<span style="left:241.60px;top:464.31px;font-size:19px;color:#ffffff;">g</span>
<div style="left:276px;top:462px;width:35px;height:33px;background:#333333;"></div>
<span style="left:280.08px;top:464.31px;font-size:19px;color:#ffffff;">h</span>
<div style="left:315px;top:462px;width:35px;height:33px;background:#333333;"></div>
<span style="left:320.86px;top:464.31px;font-size:19px;color:#ffffff;">j</span>
<div style="left:354px;top:462px;width:35px;height:33px;background:#333333;"></div>
<span style="left:358.12px;top:464.31px;font-size:19px;color:#ffffff;">k</span>
<div style="left:393px;top:462px;width:35px;height:33px;background:#333333;"></div>
<span style="left:397.12px;top:464.31px;font-size:19px;color:#ffffff;">l</span>
<div style="left:432px;top:462px;width:35px;height:33px;background:#333333;"></div>
<span style="left:435.81px;top:466.32px;font-size:14.5px;color:#7a7a7a;transform:scaleX(0.9000);">:</span>
<span style="left:448.58px;top:472.01px;font-size:19px;color:#ffffff;transform:scaleX(0.9500);">;</span>
<div style="left:471px;top:462px;width:35px;height:33px;background:#333333;"></div>
<span style="left:475.95px;top:466.32px;font-size:14.5px;color:#7a7a7a;transform:scaleX(0.9000);">&quot;</span>
<span style="left:489.28px;top:472.01px;font-size:19px;color:#ffffff;transform:scaleX(0.9500);">&#x27;</span>
<div style="left:510px;top:462px;width:105px;height:33px;background:#333333;"></div>
<span style="left:513.90px;top:464.31px;font-size:19px;color:#ffffff;transform:scaleX(0.9601);">Enter</span>
<div style="left:2px;top:499px;width:95px;height:33px;background:#333333;"></div>
<span style="left:6.11px;top:500.51px;font-size:19px;color:#ffffff;transform:scaleX(1.0266);">Shift</span>
<div style="left:101px;top:499px;width:35px;height:33px;background:#333333;"></div>
<span style="left:105.63px;top:500.51px;font-size:19px;color:#ffffff;">z</span>
<div style="left:140px;top:499px;width:35px;height:33px;background:#333333;"></div>
<span style="left:145.19px;top:500.51px;font-size:19px;color:#ffffff;">x</span>
<div style="left:179px;top:499px;width:35px;height:33px;background:#333333;"></div>
<span style="left:183.59px;top:500.51px;font-size:19px;color:#ffffff;">c</span>
<div style="left:218px;top:499px;width:35px;height:33px;background:#333333;"></div>
<span style="left:223.34px;top:500.51px;font-size:19px;color:#ffffff;">v</span>
<div style="left:257px;top:499px;width:35px;height:33px;background:#333333;"></div>
<span style="left:261.18px;top:500.51px;font-size:19px;color:#ffffff;">b</span>
<div style="left:296px;top:499px;width:35px;height:33px;background:#333333;"></div>
<span style="left:300.14px;top:500.51px;font-size:19px;color:#ffffff;">n</span>
<div style="left:335px;top:499px;width:35px;height:33px;background:#333333;"></div>
<span style="left:339.14px;top:500.51px;font-size:19px;color:#ffffff;">m</span>
<div style="left:374px;top:499px;width:35px;height:33px;background:#333333;"></div>
<span style="left:378.36px;top:503.32px;font-size:14.5px;color:#7a7a7a;transform:scaleX(0.9000);">&lt;</span>
<span style="left:390.38px;top:511.01px;font-size:19px;color:#ffffff;transform:scaleX(0.9500);">,</span>
<div style="left:413px;top:499px;width:35px;height:33px;background:#333333;"></div>
<span style="left:417.36px;top:503.32px;font-size:14.5px;color:#7a7a7a;transform:scaleX(0.9000);">&gt;</span>
<span style="left:429.35px;top:511.01px;font-size:19px;color:#ffffff;transform:scaleX(0.9500);">.</span>
<div style="left:452px;top:499px;width:35px;height:33px;background:#333333;"></div>
<span style="left:456.46px;top:503.32px;font-size:14.5px;color:#7a7a7a;transform:scaleX(0.9000);">?</span>
<span style="left:468.80px;top:510.00px;font-size:21.5px;color:#ffffff;transform:scaleX(1.2891);">/</span>
<div style="left:491px;top:499px;width:35px;height:33px;background:#333333;"></div>
<svg style="left:496px;top:502px;" width="19" height="11" viewBox="0 0 19 11"><path d="M0.700 10.300L9.500 1.200l8.800 9.100" fill="none" stroke="#fff" stroke-width="1.500"/></svg>
<div style="left:530px;top:499px;width:85px;height:33px;background:#333333;"></div>
<span style="left:534.84px;top:500.51px;font-size:19px;color:#ffffff;transform:scaleX(0.9969);">Shift</span>
<div style="left:2px;top:536px;width:36px;height:33px;background:#333333;"></div>
<span style="left:5.25px;top:537.51px;font-size:19px;color:#ffffff;transform:scaleX(0.9288);">Fn</span>
<div style="left:41px;top:536px;width:36px;height:33px;background:#333333;"></div>
<span style="left:45.19px;top:538.90px;font-size:15px;color:#ffffff;transform:scaleX(1.0667);">Ctrl</span>
<div style="left:80px;top:536px;width:36px;height:33px;background:#333333;"></div>
<svg style="left:90.5px;top:545px;" width="13" height="13" viewBox="0 0 13 13"><path d="M0 1.800l5.300-.75v5.100H0zM6 .950L13 0v6.150H6zM0 6.900h5.300v5.100L0 11.250zM6 6.900h7V13l-7-.950z" fill="#fff"/></svg>
<div style="left:119px;top:536px;width:36px;height:33px;background:#333333;"></div>
<span style="left:124.56px;top:537.51px;font-size:19px;color:#ffffff;transform:scaleX(0.9729);">Alt</span>
<div style="left:158px;top:536px;width:215px;height:33px;background:#333333;"></div>
<div style="left:376px;top:536px;width:36px;height:33px;background:#333333;"></div>
<span style="left:381.46px;top:537.51px;font-size:19px;color:#ffffff;transform:scaleX(0.9774);">Alt</span>
<div style="left:415px;top:536px;width:36px;height:33px;background:#333333;"></div>
<span style="left:419.21px;top:538.90px;font-size:15px;color:#ffffff;transform:scaleX(1.0388);">Ctrl</span>
<div style="left:454px;top:536px;width:36px;height:33px;background:#333333;"></div>
<svg style="left:459.5px;top:540.5px;" width="11" height="18" viewBox="0 0 11 18"><path d="M10 0.700L1.200 9l8.800 8.300" fill="none" stroke="#fff" stroke-width="1.500"/></svg>
<div style="left:493px;top:536px;width:36px;height:33px;background:#333333;"></div>
<svg style="left:497px;top:540px;" width="20" height="11" viewBox="0 0 20 11"><path d="M0.700 0.700L10 9.800 19.300 0.700" fill="none" stroke="#fff" stroke-width="1.500"/></svg>
<div style="left:532px;top:536px;width:36px;height:33px;background:#333333;"></div>
<svg style="left:537.5px;top:540.5px;" width="11" height="18" viewBox="0 0 11 18"><path d="M1 0.700L9.800 9 1 17.300" fill="none" stroke="#fff" stroke-width="1.500"/></svg>
<div style="left:571px;top:536px;width:44px;height:33px;background:#333333;"></div>
<svg style="left:587.5px;top:545.5px;" width="10" height="12.5" viewBox="0 0 10 12.5"><rect x="0" y="0" width="10" height="2.200" fill="#fff"/><rect x="0.600" y="3.600" width="8.800" height="8.300" fill="none" stroke="#fff" stroke-width="1.200"/><path d="M2.500 6.500h5M2.500 9h5" stroke="#fff" stroke-width="1.100"/></svg>
<div style="left:625px;top:388px;width:63px;height:34px;background:#333333;"></div>
<span style="left:628.66px;top:390.56px;font-size:18px;color:#ffffff;transform:scaleX(1.0451);">Home</span>
<div style="left:625px;top:425px;width:63px;height:34px;background:#333333;"></div>
<span style="left:628.65px;top:428.36px;font-size:18px;color:#ffffff;transform:scaleX(1.0480);">End</span>
<div style="left:625px;top:462px;width:63px;height:34px;background:#333333;"></div>
<span style="left:628.44px;top:465.36px;font-size:18px;color:#ffffff;transform:scaleX(1.0596);">Insert</span>
<div style="left:625px;top:499px;width:63px;height:33.5px;background:#333333;"></div>
<span style="left:628.40px;top:501.08px;font-size:17.5px;color:#ffffff;transform:scaleX(0.9731);">PrtScn</span>
<div style="left:625px;top:538px;width:63px;height:31px;background:#333333;"></div>
<span style="left:629.72px;top:540.15px;font-size:14px;color:#ffffff;transform:scaleX(1.0196);">Options</span>
<div style="left:691px;top:388px;width:64px;height:34px;background:#333333;"></div>
<span style="left:694.57px;top:390.56px;font-size:18px;color:#ffffff;transform:scaleX(1.1006);">PgUp</span>
<div style="left:691px;top:425px;width:64px;height:34px;background:#333333;"></div>
<span style="left:694.60px;top:428.36px;font-size:18px;color:#ffffff;transform:scaleX(1.0807);">PgDn</span>
<div style="left:691px;top:462px;width:64px;height:34px;background:#333333;"></div>
<span style="left:694.75px;top:465.36px;font-size:18px;color:#ffffff;transform:scaleX(0.9803);">Pause</span>
<div style="left:691px;top:499px;width:64px;height:33.5px;background:#333333;"></div>
<span style="left:695.71px;top:501.76px;font-size:18px;color:#ffffff;transform:scaleX(0.9686);">ScrLk</span>
<div style="left:691px;top:538px;width:64px;height:31px;background:#333333;"></div>
<span style="left:694.50px;top:539.66px;font-size:18px;color:#ffffff;transform:scaleX(0.9515);">Help</span>
<div style="left:761px;top:388px;width:64px;height:34px;background:#333333;"></div>
<span style="left:764.58px;top:390.56px;font-size:18px;color:#ffffff;transform:scaleX(1.0994);">Nav</span>
<div style="left:761px;top:425px;width:64px;height:34px;background:#333333;"></div>
<span style="left:764.77px;top:429.05px;font-size:16px;color:#ffffff;transform:scaleX(1.0872);">Mv Up</span>
<div style="left:761px;top:462px;width:64px;height:34px;background:#333333;"></div>
<span style="left:764.76px;top:466.05px;font-size:16px;color:#ffffff;transform:scaleX(1.0963);">Mv Dn</span>
<div style="left:761px;top:499px;width:64px;height:33.5px;background:#333333;"></div>
<span style="left:764.68px;top:501.86px;font-size:18px;color:#7a7a7a;transform:scaleX(1.0314);">Dock</span>
<div style="left:761px;top:536px;width:64px;height:33px;background:#333333;"></div>
<span style="left:764.72px;top:538.56px;font-size:18px;color:#ffffff;transform:scaleX(1.0013);">Fade</span>
<div style="left:835px;top:388px;width:40px;height:34px;background:#333333;"></div>
<span style="left:839.57px;top:390.51px;font-size:19px;color:#ffffff;transform:scaleX(0.9500);">7</span>
<div style="left:878px;top:388px;width:40px;height:34px;background:#333333;"></div>
<span style="left:882.72px;top:390.51px;font-size:19px;color:#ffffff;transform:scaleX(0.9500);">8</span>
<div style="left:921px;top:388px;width:40px;height:34px;background:#333333;"></div>
<span style="left:925.65px;top:390.51px;font-size:19px;color:#ffffff;transform:scaleX(0.9500);">9</span>
<div style="left:964px;top:388px;width:43px;height:34px;background:#333333;"></div>
<span style="left:969.10px;top:391.02px;font-size:21px;color:#ffffff;transform:scaleX(1.3369);">/</span>
<div style="left:835px;top:425px;width:40px;height:34px;background:#333333;"></div>
<span style="left:840.09px;top:427.31px;font-size:19px;color:#ffffff;transform:scaleX(0.9500);">4</span>
<div style="left:878px;top:425px;width:40px;height:34px;background:#333333;"></div>
<span style="left:882.78px;top:427.31px;font-size:19px;color:#ffffff;transform:scaleX(0.9500);">5</span>
<div style="left:921px;top:425px;width:40px;height:34px;background:#333333;"></div>
<span style="left:925.58px;top:427.31px;font-size:19px;color:#ffffff;transform:scaleX(0.9500);">6</span>
<div style="left:964px;top:425px;width:43px;height:34px;background:#333333;"></div>
<span style="left:969.21px;top:428.51px;font-size:19px;color:#ffffff;transform:scaleX(0.9571);">*</span>
<div style="left:835px;top:462px;width:40px;height:33px;background:#333333;"></div>
<span style="left:839.13px;top:464.31px;font-size:19px;color:#ffffff;transform:scaleX(0.9500);">1</span>
<div style="left:878px;top:462px;width:40px;height:33px;background:#333333;"></div>
<span style="left:882.59px;top:464.31px;font-size:19px;color:#ffffff;transform:scaleX(0.9500);">2</span>
<div style="left:921px;top:462px;width:40px;height:33px;background:#333333;"></div>
<span style="left:925.81px;top:464.31px;font-size:19px;color:#ffffff;transform:scaleX(0.9500);">3</span>
<div style="left:964px;top:462px;width:43px;height:33px;background:#333333;"></div>
<span style="left:968.70px;top:465.31px;font-size:19px;color:#ffffff;transform:scaleX(0.9500);">-</span>
<div style="left:835px;top:499px;width:83px;height:33px;background:#333333;"></div>
<span style="left:839.79px;top:500.51px;font-size:19px;color:#ffffff;transform:scaleX(0.9500);">0</span>
<div style="left:921px;top:499px;width:40px;height:33px;background:#333333;"></div>
<span style="left:924.85px;top:500.51px;font-size:19px;color:#ffffff;transform:scaleX(0.9500);">.</span>
<div style="left:964px;top:499px;width:43px;height:33px;background:#333333;"></div>
<span style="left:969.03px;top:502.81px;font-size:19px;color:#ffffff;transform:scaleX(1.0508);">+</span>
<div style="left:835px;top:536px;width:83px;height:33px;background:#333333;"></div>
<span style="left:838.47px;top:537.51px;font-size:19px;color:#ffffff;transform:scaleX(0.9830);">Enter</span>
<div style="left:921.5px;top:536px;width:86px;height:33px;background:#0078d7;"></div>
<span style="left:925.38px;top:537.51px;font-size:19px;color:#ffffff;transform:scaleX(0.9083);">NumLock</span>
</div></body></html>
